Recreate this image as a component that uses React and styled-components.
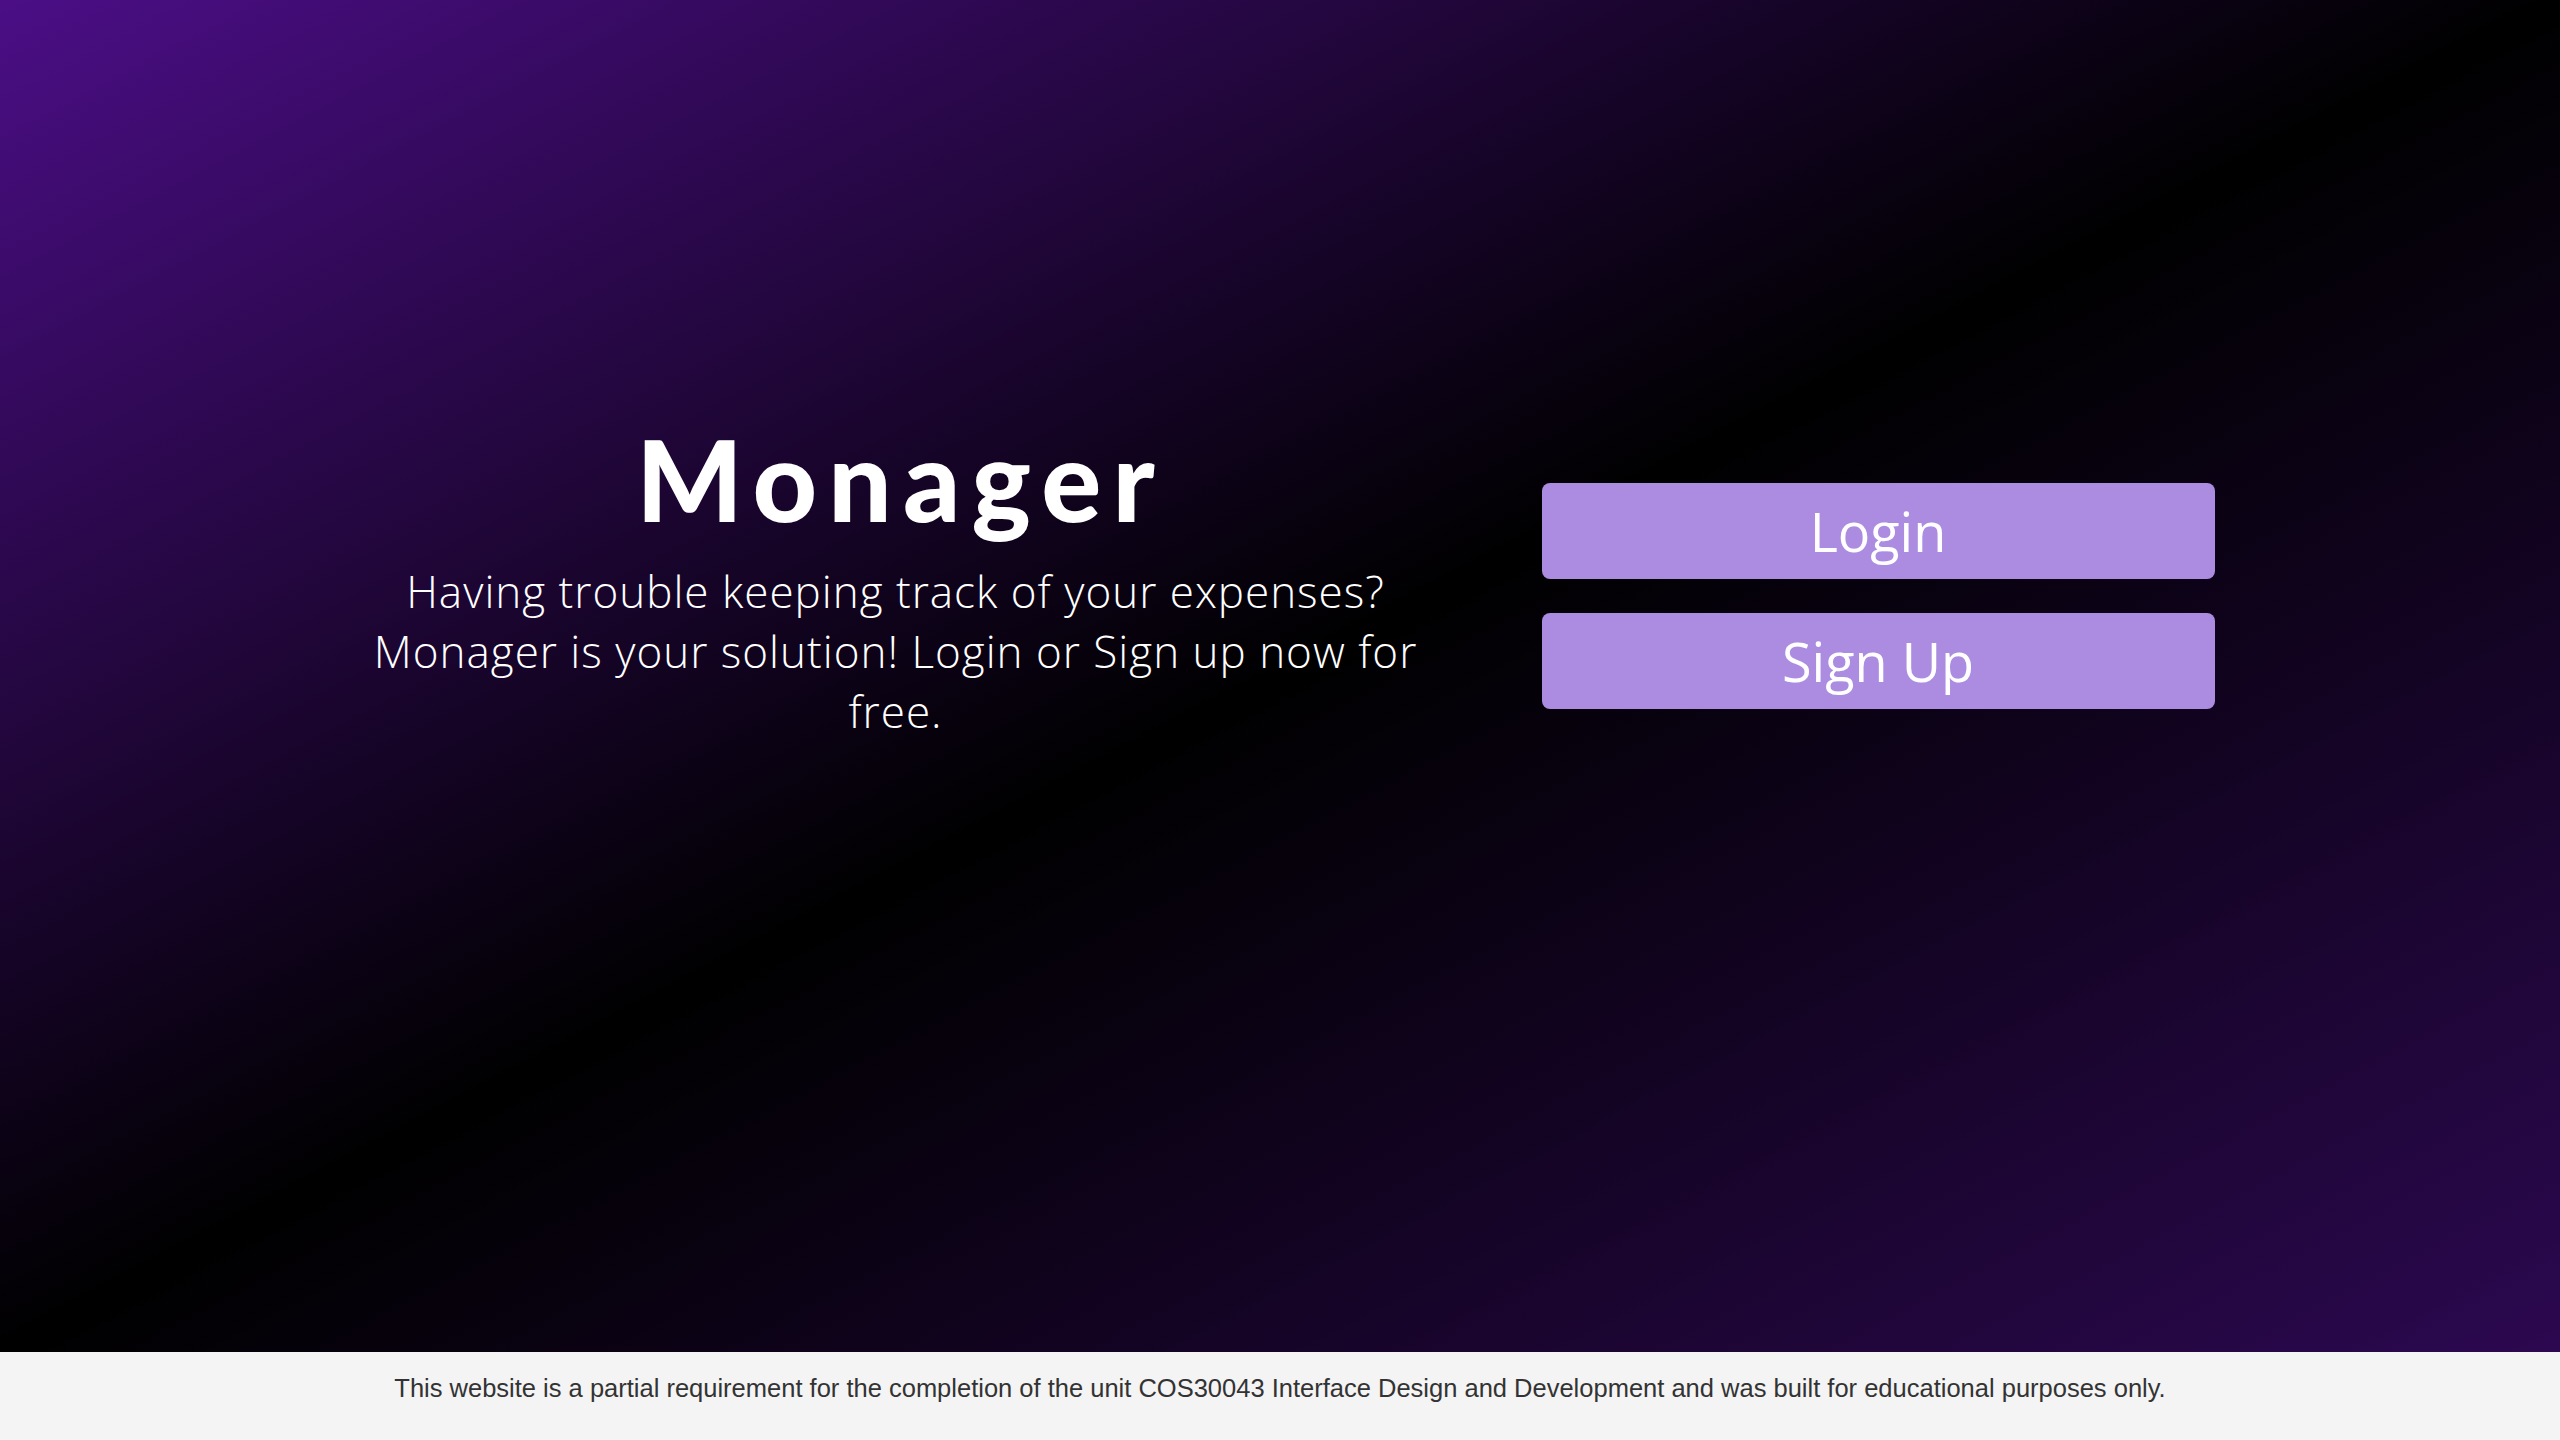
import styled, { createGlobalStyle } from "styled-components";

const GlobalStyle = createGlobalStyle`
  html, body {
    margin: 0;
    padding: 0;
  }
  body {
    font-family: "Open Sans", "Liberation Sans", sans-serif;
  }
  * {
    box-sizing: border-box;
  }
`

const StyledPage = styled.div`
  display: flex;
  flex-direction: column;
  min-height: 100vh;
`

const StyledHero = styled.main`
  flex: 1;
  display: flex;
  justify-content: center;
  align-items: flex-start;
  padding-top: 417px;
  background: linear-gradient(to bottom right, #4b0e86 0%, #000000 50%, #2c0850 100%);
`

const StyledRow = styled.div`
  display: flex;
  flex-direction: row;
  align-items: flex-start;
  gap: 96px;
`

const StyledIntro = styled.section`
  width: 1100px;
  display: flex;
  flex-direction: column;
  align-items: center;
  text-align: center;
  color: #ffffff;
`

const StyledTitle = styled.h1`
  margin: 0;
  font-family: "Lato", "Open Sans", sans-serif;
  font-weight: 900;
  font-size: 112px;
  line-height: 1.1;
  letter-spacing: 0.1em;
  margin-right: -0.1em;
`

const StyledBlurb = styled.p`
  margin: 21px 0 0 0;
  font-family: "Open Sans", "Lato", sans-serif;
  font-weight: 300;
  font-size: 44px;
  letter-spacing: 1px;
  line-height: 60px;
`

const StyledActions = styled.div`
  width: 673px;
  margin-top: 66px;
  display: flex;
  flex-direction: column;
  gap: 34px;
`

const StyledButton = styled.button`
  height: 96px;
  width: 100%;
  border: none;
  border-radius: 8px;
  background-color: #ab8ce1;
  color: #ffffff;
  font-family: "Open Sans", "Lato", sans-serif;
  font-size: 54px;
  font-weight: 400;
  cursor: pointer;
`

const StyledFooter = styled.footer`
  height: 88px;
  background-color: #f4f4f4;
  color: #333333;
  font-family: "Liberation Sans", Arial, sans-serif;
  font-size: 25.5px;
  text-align: center;
  padding-top: 22px;
`

const App = () => {
  return (
    <StyledPage>
      <GlobalStyle />
      <StyledHero>
        <StyledRow>
          <StyledIntro>
            <StyledTitle>Monager</StyledTitle>
            <StyledBlurb>
              Having trouble keeping track of your expenses?<br />
              Monager is your solution! Login or Sign up now for<br />
              free.
            </StyledBlurb>
          </StyledIntro>
          <StyledActions>
            <StyledButton>Login</StyledButton>
            <StyledButton>Sign Up</StyledButton>
          </StyledActions>
        </StyledRow>
      </StyledHero>
      <StyledFooter>
        This website is a partial requirement for the completion of the unit COS30043 Interface Design and Development and was built for educational purposes only.
      </StyledFooter>
    </StyledPage>
  );
}

export default App;
